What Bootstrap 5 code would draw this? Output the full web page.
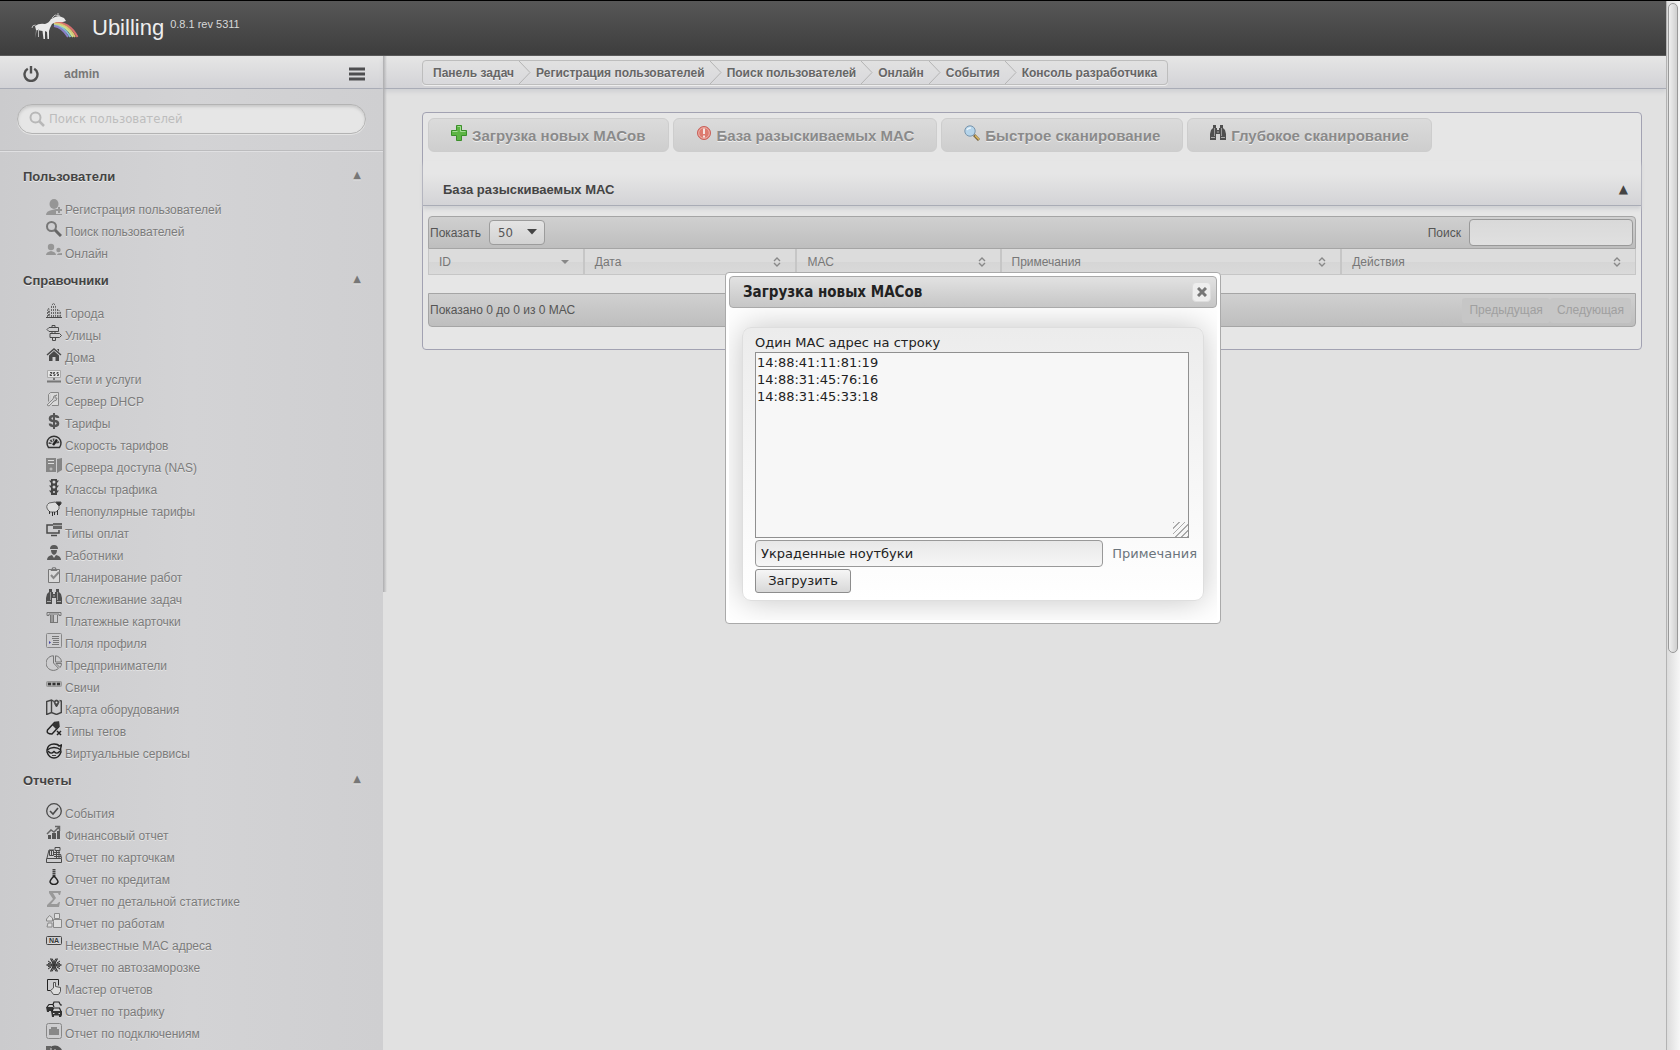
<!DOCTYPE html>
<html lang="ru">
<head>
<meta charset="utf-8">
<meta name="viewport" content="width=device-width, initial-scale=1">
<title>Ubilling</title>
<link rel="stylesheet" href="https://cdn.jsdelivr.net/npm/bootstrap@5.3.0/dist/css/bootstrap.min.css">
<style>
  :root { --ui: "Liberation Sans", Arial, sans-serif; --dlg: "DejaVu Sans", sans-serif; --narrow: "DejaVu Sans Condensed", "DejaVu Sans", sans-serif; }
  body { font-family: var(--ui); font-size: 12px; line-height: 16px; color: #555; background: #e1e1e1; border-top: 1px solid #000; }
  a { text-decoration: none; color: inherit; }
  svg { display: block; flex: none; }
  .ico { width: 16px; height: 16px; fill: none; stroke: #4a4a4a; }

  .topbar { height: 55px; padding: 0 30px; background: linear-gradient(#575757, #3d3d3d); border-bottom: 1px solid #5a5a5a; flex: none; }
  .brand-name { font-size: 22px; line-height: 28px; color: #eee; margin-left: 12px; }
  .brand-rev { top: 0; font-size: 11px; color: #d8d8d8; margin: 0 0 9px 6px; }

  .side { width: 383px; flex: none; background: linear-gradient(90deg, #cbcbcd, #d3d3d5 50%, #cfcfd1); }
  .strip { height: 33px; background: linear-gradient(#e6e6e6, #d2d2d6); border-bottom: 1px solid #a9acb6; flex: none; }
  .side .strip { padding: 3px 18px 0 23px; }
  .side-user { font-weight: bold; color: #777; margin-left: 25px; }
  .edge { width: 4px; height: 536px; flex: none; margin-right: -4px; background: linear-gradient(90deg, #adadaf, rgba(200,200,200,0)); z-index: 1; }
  .quick { margin: 15px 17px 16px; height: 30px; padding: 0 11px; border: 1px solid #b3b3b3; border-radius: 15px; background: #e6e6e6; box-shadow: inset 0 2px 3px #c8c8c8, 0 1px 0 #e4e4e4; }
  .quick input { font: 13px/18px var(--narrow); color: #555; }
  .quick input::placeholder { color: #bdbdbd; opacity: 1; }
  .rule { border-top: 1px solid #bcbcbe; border-bottom: 1px solid #e0e0e2; margin-bottom: 9px; }
  .grp { height: 38px; padding: 0 22px 6px 23px; font-size: 13px; font-weight: bold; color: #444; text-shadow: 0 1px 0 #eaeaea; }
  .tri { font: 10px/10px "DejaVu Sans", sans-serif; color: #777; padding-bottom: 4px; }
  .links { list-style: none; margin: 0; padding: 0 0 0 46px; }
  .links a { display: flex; height: 22px; gap: 3px; line-height: 22px; color: #7b7b7b; text-shadow: 0 1px 0 #e6e6e6; }

  .fluid-col { min-width: 0; }
  .work .strip { padding: 4px 0 0 39px; box-shadow: 0 3px 4px #d0d1d4; }
  .crumbs { display: flex; width: max-content; margin: 0; padding: 0; list-style: none; height: 25px; border: 1px solid #bdbdbd; border-radius: 4px; overflow: hidden; box-shadow: 0 1px 0 #eee; background: linear-gradient(#e1e1e1, #d9d9dc); }
  .crumbs a { display: block; font-weight: bold; line-height: 24px; color: #666; padding: 0 5px; text-shadow: 0 1px 0 #f0f0f0; }
  .crumbs li { display: flex; }
  .crumbs li:first-child a { padding-left: 10px; }
  .crumbs li:last-child a { padding-right: 10px; }
  .panel { margin: 23px 24px 0 39px; padding-bottom: 22px; border: 1px solid #a2a2b2; border-radius: 4px; background: #e6e6e6; }
  .tools { padding: 5px; gap: 4px; }
  .tool { display: flex; height: 34px; padding: 0 22px; gap: 5px; font: bold 15px/34px var(--ui); color: #8a8a8a; text-shadow: 0 1px 0 #efefef; border: 1px solid #cdcdcd; border-radius: 6px; background: linear-gradient(#dbdbdb, #cecece); }
  .tool svg { margin-top: 6px; }
  .sect { height: 45px; margin-top: 4px; padding: 0 13px 0 20px; color: #444; background: linear-gradient(#e6e6e6 30%, #d3d3d6); border-bottom: 1px solid #a9acb6; box-shadow: 0 3px 4px #cfd0d3; }
  .sect h2 { font-size: 13px; font-weight: bold; margin: 14px 0 0; }
  .sect .tri { font-size: 12px; color: #444; margin-top: 14px; padding-bottom: 2px; }
  .grid-wrap { margin: 10px 5px 0; }
  .bar { height: 34px; padding: 0 2px 0 1px; border: 1px solid #a5a5a5; background: linear-gradient(#d0d0d0, #bebebe); }
  .bar.top { height: 33px; border-radius: 4px 4px 0 0; }
  .bar.bottom { border-radius: 0 0 4px 4px; margin-top: 18px; padding-right: 4px; }
  .pick { appearance: none; width: 56px; height: 25px; padding: 0 8px; margin-left: 8px; border: 1px solid #9c9c9c; border-radius: 4px; font: 13px/22px var(--narrow); color: #555; background: linear-gradient(#e4e4e4, #d2d2d2); }
  .pick-box { position: relative; }
  .pick-box svg { position: absolute; right: 8px; top: 9px; pointer-events: none; }
  .find { width: 164px; height: 27px; margin-left: 8px; border: 1px solid #999; border-radius: 4px; background: linear-gradient(#d9d9d9, #e0e0e0); }
  .macs { width: 100%; table-layout: fixed; border-collapse: separate; border-spacing: 0; }
  .macs th { height: 26px; padding: 0 14px 0 10px; font-weight: normal; color: #777; border: 1px solid #c6c6c6; border-top: 0; background: linear-gradient(#dcdcdc 50%, #d5d5d5 50%, #dadada); }
  .macs svg { stroke: #888; stroke-width: 1.4; }
  .pager { height: 25px; padding: 0 7px; border: 0; background: #c6c6c6; color: #a0a0a0; font: 12px/20px var(--ui); border-radius: 3px; }

  .dlg { position: absolute; left: 725px; top: 272px; width: 496px; padding: 3px; color: #222; background: #fff; border: 1px solid #aaa; border-radius: 4px; font: 13px/18px var(--dlg); }
  .dlg-title { height: 32px; padding: 0 5px 0 13px; border: 1px solid #aaa; border-radius: 4px; background: linear-gradient(#e2e2e2, #c6c6c6); }
  .dlg-title h1 { font: bold 15px/20px var(--narrow); margin: 0; }
  .dlg-x { width: 19px; height: 20px; padding: 0; border: 1px solid #ddd; border-radius: 4px; background: #eee; }
  .dlg-body { padding: 19px 13px 19px; overflow: hidden; }
  .frame { padding: 6px 6px 7px 12px; border: 1px solid #dedede; border-radius: 9px; background: linear-gradient(#ececec, #fff); box-shadow: 0 0 32px #c4c4c4; }
  .frame label { display: block; }
  .dlg textarea { display: block; width: 434px; height: 186px; padding: 1px; margin-bottom: 2px; border: 1px solid #909090; background: #f7f7f7; font: 13px/17px var(--dlg); color: #222; }
  .dlg textarea::-webkit-resizer { background: repeating-linear-gradient(135deg, #aaa 0 1px, #f7f7f7 1px 4px); clip-path: polygon(100% 0, 100% 100%, 0 100%); }
  .note { width: 348px; height: 27px; padding: 0 5px; border: 1px solid #999; border-radius: 4px; background: linear-gradient(#e8e8e8, #f6f6f6); font: 13px/20px var(--dlg); color: #222; }
  .send { width: 96px; height: 24px; margin-top: 2px; padding: 0; border: 1px solid #8d8d8d; border-radius: 3px; background: linear-gradient(#f6f6f6, #d8d8d8); font: 13px/20px var(--dlg); color: #222; }

  .scroll { width: 14px; flex: none; padding: 2px 2px 0 1px; border-left: 1px solid #b3b3b3; background: linear-gradient(90deg, #dcdcdc, #f7f7f7); }
  .thumb { height: 650px; border: 1px solid #999; border-radius: 5px; background: linear-gradient(90deg, #efefef, #cfcfcf); }
</style>
<script src="https://cdn.jsdelivr.net/npm/bootstrap@5.3.0/dist/js/bootstrap.bundle.min.js"></script>
</head>
<body class="vh-100 overflow-hidden d-flex">
<svg width="0" height="0" class="position-absolute" aria-hidden="true">
  <symbol id="sort" viewBox="0 0 8 10"><path d="M1 4 4 1l3 3M1 6l3 3 3-3" fill="none"/></symbol>
  <symbol id="bino" viewBox="0 0 16 16"><path d="M3 0h3v3h1v2h2V3h1V0h3v3l2 2 1 4v6h-6V9H6v6H0V9l1-4 2-2z" fill="#4f4f4f" stroke="none"/><path d="M4.500 3v8M11.500 3v8" stroke="#999"/><path d="M1 12.500h4M11 12.500h4M7 7h2" stroke="#aaa"/></symbol>
</svg>

<div class="flex-grow-1 d-flex flex-column fluid-col">
  <header class="topbar d-flex align-items-center">
    <svg width="50" height="30" viewBox="0 0 50 30">
      <g fill="none" stroke-width="1.800"><path d="M24 9Q40 9 47.500 24" stroke="#d87070"/><path d="M24 10.500Q38 10.500 45 24" stroke="#e0c070"/><path d="M24 12Q37 12 43 24" stroke="#c8e090"/><path d="M24 12.500Q34 13 40.500 24" stroke="#85bfd8"/><path d="M24 13Q32 14 38 24" stroke="#8b80c8"/></g>
      <path d="M5 13q4-3 10-2 4-1 6-5l4-2 4-1 5 2 2 3-3 1-7 0-4 2-2 4-1 3v8h-1.500l-.500-7-2-1v8h-1.500l-1-8-6-1-1 8H5.500l.500-8z" fill="#e8e8e8"/>
      <path d="M28 4V0M5.500 12q-3.500 0-3.500 3M8.500 16v8M22 5l3-3 5 1" stroke="#bbb" fill="none"/>
    </svg>
    <a href="#" class="brand-name">Ubilling</a><sup class="brand-rev">0.8.1 rev 5311</sup>
  </header>

  <div class="d-flex flex-grow-1 overflow-hidden">
    <aside class="side">
      <div class="strip d-flex align-items-center">
        <a href="#" aria-label="Выход"><svg width="16" height="16" viewBox="0 0 16 16" fill="none" stroke="#505050" stroke-width="2.400"><path d="M4.800 2.800a6.500 6.500 0 1 0 6.400 0M8 0v7.500"/></svg></a>
        <a href="#" class="side-user">admin</a>
        <button type="button" class="ms-auto p-0 border-0 bg-transparent" aria-label="Меню"><svg width="16" height="14" viewBox="0 0 16 14" fill="#4e4e50"><path d="M0 .500h16v3H0zM0 5.500h16v3H0zM0 10.500h16v3H0z"/></svg></button>
      </div>
      <form class="quick d-flex align-items-center">
        <svg width="16" height="16" viewBox="0 0 16 16" fill="none" stroke="#b8b8b8" stroke-width="2"><circle cx="6.500" cy="6.500" r="5"/><path d="m10 10 5 5" stroke-width="2.500"/></svg>
        <input type="text" class="flex-grow-1 border-0 bg-transparent p-0 ms-1" aria-label="Поиск пользователей" placeholder="Поиск пользователей">
      </form>
      <div class="rule"></div>
      <nav>
        <div class="grp d-flex justify-content-between align-items-center"><span>Пользователи</span><span class="tri">▲</span></div>
        <ul class="links">
          <li><a href="#"><svg class="ico" viewBox="0 0 16 16"><g fill="#969696" stroke="none"><ellipse cx="8" cy="5" rx="4.500" ry="5"/><path d="M0 16q0-4 6-5l4-1v6z"/><path d="M12 8h2v2h2v2h-2v2h-2v-2h-2v-2h2z"/><path d="M10 15h6v1h-6z"/></g></svg>Регистрация пользователей</a></li>
          <li><a href="#"><svg class="ico" viewBox="0 0 16 16"><circle cx="5.500" cy="5.500" r="4.500" stroke-width="2" stroke="#777"/><path d="m9 9 6 6" stroke-width="3" stroke="#666"/></svg>Поиск пользователей</a></li>
          <li><a href="#"><svg class="ico" viewBox="0 0 16 16"><g fill="#969696" stroke="none"><circle cx="5" cy="4" r="3.200"/><circle cx="12.500" cy="7" r="2.200"/><path d="M0 12q0-3 5-4 5 1 5 4zM11 12q0-2 5-2v2z"/></g></svg>Онлайн</a></li>
        </ul>
        <div class="grp d-flex justify-content-between align-items-center"><span>Справочники</span><span class="tri">▲</span></div>
        <ul class="links">
          <li><a href="#"><svg class="ico" viewBox="0 0 16 16"><path d="M0 14.500h16"/><path d="M1.500 14V8l1-3 1 3v6M5.500 14V3l2-3 2 3v11M11.500 14V6l3 3v5M7.500 3v11M13 9v5M2.500 8v6" stroke="#666" stroke-dasharray="2 1"/></svg>Города</a></li>
          <li><a href="#"><svg class="ico" viewBox="0 0 16 16"><path d="M6 2.500V.500h3v2M3 2.500h9.500v4H3l-2-2zM4 8.500h9.500l2 2-2 2H4zM6 6.500v2M9 6.500v2M6.500 12.500v3h3v-3"/></svg>Улицы</a></li>
          <li><a href="#"><svg class="ico" viewBox="0 0 16 16"><path d="m1 8 7-6 7 6" stroke-width="1.500"/><path d="M3 8.500 8 4l5 4.500V14H9.500v-4h-3v4H3zM11 2h2v3z" fill="#4a4a4a" stroke="none"/></svg>Дома</a></li>
          <li><a href="#"><svg class="ico" viewBox="0 0 16 16"><path d="M1.500 1.500h13v7h-13z" fill="#e6e6e6" stroke="#aaa"/><path d="M4 3.500h2v1l-2 1v1h2M9 3.500H7.500V5H9v1.500H7.500M12.500 3.500H11V5h1.500v1.500H11"/><path d="M8 9v2M1 12.500h14" stroke-width="2" stroke="#777"/></svg>Сети и услуги</a></li>
          <li><a href="#"><svg class="ico" viewBox="0 0 16 16"><path d="M4.500 1.500h8v13H6M4.500 1.500l-2 2v7M11 4q-4 0-4 4l-6 6 2 1 5-5q3 0 3-3H9V5.500z" stroke="#888" fill="#d9d9d9"/></svg>Сервер DHCP</a></li>
          <li><a href="#"><svg class="ico" viewBox="0 0 16 16"><path d="M12 5q0-2-4-2T4 5.500 8 8t4 2.500T8 13t-4-2.500" stroke-width="2.600" stroke="#555"/><path d="M8 0v16" stroke-width="2" stroke="#555"/></svg>Тарифы</a></li>
          <li><a href="#"><svg class="ico" viewBox="0 0 16 16"><path d="M2.500 12.500a7 7 0 1 1 11 0z" stroke="#333" stroke-width="1.500"/><path d="M4 9a4 4 0 0 1 8 0" stroke-width="3" stroke-dasharray="1.500 1"/><path d="m7 10 4-5" stroke="#222" stroke-width="2.500"/></svg>Скорость тарифов</a></li>
          <li><a href="#"><svg class="ico" viewBox="0 0 16 16"><path d="M0 1h10v14H0zM11 2l5-1v12l-5 3z" fill="#858585" stroke="none"/><path d="M2 3.500h6M2 6.500h6" stroke="#ddd"/><circle cx="5" cy="12" r="1" stroke="#ccc"/></svg>Сервера доступа (NAS)</a></li>
          <li><a href="#"><svg class="ico" viewBox="0 0 16 16"><path d="M5 0h6v16H5zM3 1.500h10L11 4H5zM3 6.500h10L11 9H5zM3 11.500h10L11 14H5z" fill="#444" stroke="none"/><g fill="#d0d0d2" stroke="none"><circle cx="8" cy="3" r="1.500"/><circle cx="8" cy="8" r="1.500"/><circle cx="8" cy="13" r="1"/></g></svg>Классы трафика</a></li>
          <li><a href="#"><svg class="ico" viewBox="0 0 16 16"><path d="M3 2q-4 3-1 7l2 2h6l3-3V3L9 1z" fill="#ddd" stroke="#666"/><path d="M10 1h5v2l-2 2-2-2z" fill="#333"/><path d="M3.500 10v3M6.500 11v4M11.500 9v5M8.500 11v3" stroke="#333"/></svg>Непопулярные тарифы</a></li>
          <li><a href="#"><svg class="ico" viewBox="0 0 16 16"><path d="M7 2H1v8h12V7" stroke-width="1.500"/><path d="M7 0h9v6H7z" fill="#666" stroke="none"/><path d="M7 2.500h9" stroke="#aaa"/><path d="M5 12.500h6" stroke-width="1.500"/></svg>Типы оплат</a></li>
          <li><a href="#"><svg class="ico" viewBox="0 0 16 16"><g fill="#5a5a5a" stroke="none"><path d="M4 4q0-4 4-4t4 4zM5 5h6q0 4-3 5-3-1-3-5zM1 15q0-4 5-5l2 3 2-3q5 1 5 5z"/></g></svg>Работники</a></li>
          <li><a href="#"><svg class="ico" viewBox="0 0 16 16"><path d="M2.500 2.500h11v13h-11z" fill="#d9d9d9" stroke="#777"/><path d="M5 3.500h6l-1-2H9V0H7v1.500H6z" stroke="#777"/><path d="m5 8 2.500 3L13 5" stroke="#888" stroke-width="2"/></svg>Планирование работ</a></li>
          <li><a href="#"><svg class="ico"><use href="#bino"/></svg>Отслеживание задач</a></li>
          <li><a href="#"><svg class="ico" viewBox="0 0 16 16"><path d="M1 1.500h14v3h-2V3H3v1.500H1zM4.500 4v8M7.500 4v8M11.500 4v8M4 11.500h8" stroke="#777"/><path d="M5 4h2v7H5z" fill="#999" stroke="none"/></svg>Платежные карточки</a></li>
          <li><a href="#"><svg class="ico" viewBox="0 0 16 16"><rect x=".500" y=".500" width="15" height="14" rx="1" stroke="#888"/><path d="M6 3.500h7M6 5.500h7M7 7.500h6M7 9.500h6M6 11.500h7" stroke="#777"/><path d="m3 8 2 1.500L3 11z" fill="#44a" stroke="none"/></svg>Поля профиля</a></li>
          <li><a href="#"><svg class="ico" viewBox="0 0 16 16"><path d="M7.500.800a7.300 7.300 0 1 0 5 12.500L7.500 8z" stroke="#777"/><path d="M9.500.800V7h6A6.500 6.500 0 0 0 9.500.800zM10 8.500h5.500q0 2.500-1.500 4z" stroke="#777"/></svg>Предприниматели</a></li>
          <li><a href="#"><svg class="ico" viewBox="0 0 16 16"><rect x=".500" y="4.500" width="15" height="5" rx="1" fill="#aaa" stroke="#999"/><path d="M2 7h12" stroke="#333" stroke-width="2.500" stroke-dasharray="3 1.500"/></svg>Свичи</a></li>
          <li><a href="#"><svg class="ico" viewBox="0 0 16 16"><path d="M8 2.500 5.500 1 .700 2.500v13l4.800-2 5 2 4.800-2V2l-1.800-.500M5.500 1v12" stroke="#444" stroke-width="1.400"/><path d="M10.500 8Q8 4 8 3a2.600 2.600 0 0 1 5 0q0 1-2.500 5z" fill="#444"/><circle cx="10.500" cy="3.500" r="1" fill="#ddd" stroke="none"/></svg>Карта оборудования</a></li>
          <li><a href="#"><svg class="ico" viewBox="0 0 16 16"><path d="m1.500 9 7-7.500 4-.500.500 4.500-7 7.500q-6 0-4.500-4z" stroke="#222" stroke-width="1.400"/><path d="m6 4 3-3h4v5l-3 2z" fill="#333" stroke="none"/><path d="m11 10 4 4M15 10l-4 4" stroke="#222" stroke-width="1.500"/></svg>Типы тегов</a></li>
          <li><a href="#"><svg class="ico" viewBox="0 0 16 16"><path d="M1 7q1-6 7-6 4 0 5 2l2.500-1-1 4 .500 3q-2 6-7 6T1 9z" stroke="#222" stroke-width="1.400"/><path d="M1 7q7-5 14 0M2 8q3 4 6 .500Q11 12 14 8" stroke="#222" stroke-width="1.300"/><path d="M6 12.500h4" stroke="#444"/></svg>Виртуальные сервисы</a></li>
        </ul>
        <div class="grp d-flex justify-content-between align-items-center"><span>Отчеты</span><span class="tri">▲</span></div>
        <ul class="links">
          <li><a href="#"><svg class="ico" viewBox="0 0 16 16"><circle cx="8" cy="8" r="7.300" stroke-width="1.300"/><path d="m4 8 3 3 5-6" stroke-width="1.600"/></svg>События</a></li>
          <li><a href="#"><svg class="ico" viewBox="0 0 16 16"><path d="M2 10h3v4H2zM6 8h4v6H6zM11 6h3v8h-3z" fill="#555" stroke="none"/><path d="m1 9 4-4 3 2 5-5M9 1.500h4.500V6" stroke-width="1.500" stroke="#666"/></svg>Финансовый отчет</a></li>
          <li><a href="#"><svg class="ico" viewBox="0 0 16 16"><path d="M.500 11.500h15v4H.500zM1 11l2-8h5M15.500 11l-1-4M3.500 3.500h4v5h-4zM5.500 3v5M9 .500h5v3H9zM8 5.500h6M8 7.500h6M8 9.500h7M10.500 4v7M13 4v7"/></svg>Отчет по карточкам</a></li>
          <li><a href="#"><svg class="ico" viewBox="0 0 16 16"><path d="M8 0v8" stroke="#444" stroke-width="3" stroke-dasharray="1.500 .500"/><path d="M8 7q-4 4-4 6 1 2.500 4 2.500t4-2.500q0-2-4-6z" stroke="#222" stroke-width="1.500"/></svg>Отчет по кредитам</a></li>
          <li><a href="#"><svg class="ico" viewBox="0 0 16 16"><path d="M3 0h12l-1 4h-1l-1-2H7l3 5-5 6h6l2-2h1l-1 5H1v-2l6-6-4-6z" fill="#999" stroke="none"/></svg>Отчет по детальной статистике</a></li>
          <li><a href="#"><svg class="ico" viewBox="0 0 16 16"><path d="M8.500.500h5v5h-5zM.500 6l3-3.500L6.500 5v3h-6zM2 10h4v4H1zM7.500 8.500V6.500h8v8h-8z" fill="#ddd" stroke="#888"/></svg>Отчет по работам</a></li>
          <li><a href="#"><svg class="ico" viewBox="0 0 16 16"><rect x=".500" y="1.500" width="15" height="8" rx="1" stroke="#444"/><text x="3" y="8" font-size="7" font-weight="bold" fill="#333" stroke="none">NA</text></svg>Неизвестные МАС адреса</a></li>
          <li><a href="#"><svg class="ico" viewBox="0 0 16 16"><path d="M.500 8h15M4.500 1.500l7 13M11.500 1.500l-7 13" stroke="#333" stroke-width="1.300"/><path d="m2 4 3 2-3 .500M14 4l-3 2 3 .500M2 12l3-2-3-.500M14 12l-3-2 3-.500M6 1.500 8 5l2-3.500M6 14.500 8 11l2 3.500" stroke="#333"/><circle cx="8" cy="8" r="2.500" stroke="#333"/></svg>Отчет по автозаморозке</a></li>
          <li><a href="#"><svg class="ico" viewBox="0 0 16 16"><path d="M6 11.500H1.500v-11h11v6" stroke="#222"/><path d="M7.500 9V3.500h2v4l5 1v4l-2 3h-5l-3-4z" fill="#ddd" stroke="#555"/></svg>Мастер отчетов</a></li>
          <li><a href="#"><svg class="ico" viewBox="0 0 16 16"><path d="M7 3.500 8 1h5l1.500 3H16M1 6l2-2.500h4L8 6" stroke="#222" stroke-width="1.200"/><path d="M0 6h7v4H3v1H1z" fill="#333" stroke="none"/><path d="M6 10.500 7.500 7h6l1.500 3.500z" stroke="#222" stroke-width="1.200"/><path d="M5 10h11v4l-1 2h-2v-1.500H8V16H6z" fill="#333" stroke="none"/><path d="M7 12.500h1.500M12.500 12.500H14" stroke="#ddd"/></svg>Отчет по трафику</a></li>
          <li><a href="#"><svg class="ico" viewBox="0 0 16 16"><rect x=".500" y=".500" width="15" height="15" rx="2" stroke="#888"/><path d="M3 12V6h2V4h6v2h2v6z" fill="#888" stroke="none"/></svg>Отчет по подключениям</a></li>
          <li><a href="#" aria-label="Отчет"><svg class="ico" viewBox="0 0 16 16"><circle cx="9" cy="8" r="7.500" fill="#555" stroke="none"/><path d="M0 1h5v7H0z" fill="#666" stroke="none"/><path d="M5 3v4M9 4v4" stroke="#ccc"/></svg></a></li>
        </ul>
      </nav>
    </aside>
    <div class="edge"></div>

    <main class="flex-grow-1 fluid-col work">
      <div class="strip">
        <ol class="crumbs">
          <li><a href="#">Панель задач</a><svg width="12" height="23" viewBox="0 0 12 23" fill="none" stroke="#b4b4b4"><path d="m0 0 11 11.500L0 23"/></svg></li>
          <li><a href="#">Регистрация пользователей</a><svg width="12" height="23" viewBox="0 0 12 23" fill="none" stroke="#b4b4b4"><path d="m0 0 11 11.500L0 23"/></svg></li>
          <li><a href="#">Поиск пользователей</a><svg width="12" height="23" viewBox="0 0 12 23" fill="none" stroke="#b4b4b4"><path d="m0 0 11 11.500L0 23"/></svg></li>
          <li><a href="#">Онлайн</a><svg width="12" height="23" viewBox="0 0 12 23" fill="none" stroke="#b4b4b4"><path d="m0 0 11 11.500L0 23"/></svg></li>
          <li><a href="#">События</a><svg width="12" height="23" viewBox="0 0 12 23" fill="none" stroke="#b4b4b4"><path d="m0 0 11 11.500L0 23"/></svg></li>
          <li><a href="#">Консоль разработчика</a></li>
        </ol>
      </div>

      <section class="panel">
        <div class="tools d-flex">
          <button type="button" class="tool"><svg width="16" height="16" viewBox="0 0 16 16"><path d="M5.500.500h5v5h5v5h-5v5h-5v-5h-5v-5h5z" fill="#5db544" stroke="#3b8f2a"/><path d="M6.500 1.500h3v5h5M1.500 6.500h5" fill="none" stroke="#a5dc95"/></svg>Загрузка новых МАСов</button>
          <button type="button" class="tool"><svg width="16" height="16" viewBox="0 0 16 16"><circle cx="8" cy="8" r="6.500" fill="#dd7b70" stroke="#c9605a"/><circle cx="8" cy="8" r="5.300" fill="none" stroke="#ecb0a8"/><path d="M7 3.500h2V9H7zM7 10.500h2v2H7z" fill="#f4e4e2"/></svg>База разыскиваемых МАС</button>
          <button type="button" class="tool"><svg width="16" height="16" viewBox="0 0 16 16"><path d="m10 10 5 5" stroke="#7a6640" stroke-width="3"/><path d="m11 10.500 4 4" stroke="#e0bc60" stroke-width="1.200"/><circle cx="6" cy="6" r="5.200" fill="#b5d4ea" stroke="#7895ad"/><path d="M3 5q1-2.500 4-2" stroke="#eaf4fa" stroke-width="1.500" fill="none"/></svg>Быстрое сканирование</button>
          <button type="button" class="tool"><svg width="16" height="16"><use href="#bino"/></svg>Глубокое сканирование</button>
        </div>
        <div class="sect d-flex justify-content-between align-items-center"><h2>База разыскиваемых МАС</h2><span class="tri">▲</span></div>
        <div class="grid-wrap">
          <div class="bar top d-flex align-items-center">
            <label for="len">Показать</label>
            <div class="pick-box"><select id="len" class="pick"><option>50</option></select><svg width="10" height="6" viewBox="0 0 10 6" fill="#444"><path d="M0 0h10L5 5.500z"/></svg></div>
            <label for="find" class="ms-auto">Поиск</label><input type="search" id="find" class="find">
          </div>
          <table class="macs">
            <colgroup><col style="width:12.900%"><col style="width:17.600%"><col style="width:16.900%"><col style="width:28.200%"><col></colgroup>
            <thead><tr>
              <th><div class="d-flex justify-content-between align-items-center">ID<svg width="8" height="4" viewBox="0 0 8 4"><path d="M0 0h8L4 4z" fill="#888" stroke="none"/></svg></div></th>
              <th><div class="d-flex justify-content-between align-items-center">Дата<svg width="8" height="10"><use href="#sort"/></svg></div></th>
              <th><div class="d-flex justify-content-between align-items-center">МАС<svg width="8" height="10"><use href="#sort"/></svg></div></th>
              <th><div class="d-flex justify-content-between align-items-center">Примечания<svg width="8" height="10"><use href="#sort"/></svg></div></th>
              <th><div class="d-flex justify-content-between align-items-center">Действия<svg width="8" height="10"><use href="#sort"/></svg></div></th>
            </tr></thead>
          </table>
          <div class="bar bottom d-flex align-items-center">
            <span>Показано 0 до 0 из 0 МАС</span>
            <div class="ms-auto d-flex"><button type="button" class="pager">Предыдущая</button><button type="button" class="pager">Следующая</button></div>
          </div>
        </div>
      </section>
    </main>
  </div>
</div>

<div class="scroll" aria-hidden="true"><div class="thumb"></div></div>

<div class="dlg" role="dialog" aria-labelledby="dlg-head">
  <div class="dlg-title d-flex align-items-center justify-content-between">
    <h1 id="dlg-head">Загрузка новых МАСов</h1>
    <button type="button" class="dlg-x d-flex align-items-center justify-content-center" aria-label="Закрыть"><svg width="10" height="10" viewBox="0 0 10 10" stroke="#777" stroke-width="3"><path d="m1 1 8 8M9 1 1 9"/></svg></button>
  </div>
  <div class="dlg-body">
    <form class="frame">
      <label for="maclist">Один МАС адрес на строку</label>
      <textarea id="maclist" spellcheck="false">14:88:41:11:81:19
14:88:31:45:76:16
14:88:31:45:33:18</textarea>
      <div class="d-flex align-items-center">
        <input type="text" id="note" class="note" value="Украденные ноутбуки">
        <label for="note" class="ms-auto text-secondary">Примечания</label>
      </div>
      <button type="button" class="send d-block">Загрузить</button>
    </form>
  </div>
</div>
</body>
</html>
